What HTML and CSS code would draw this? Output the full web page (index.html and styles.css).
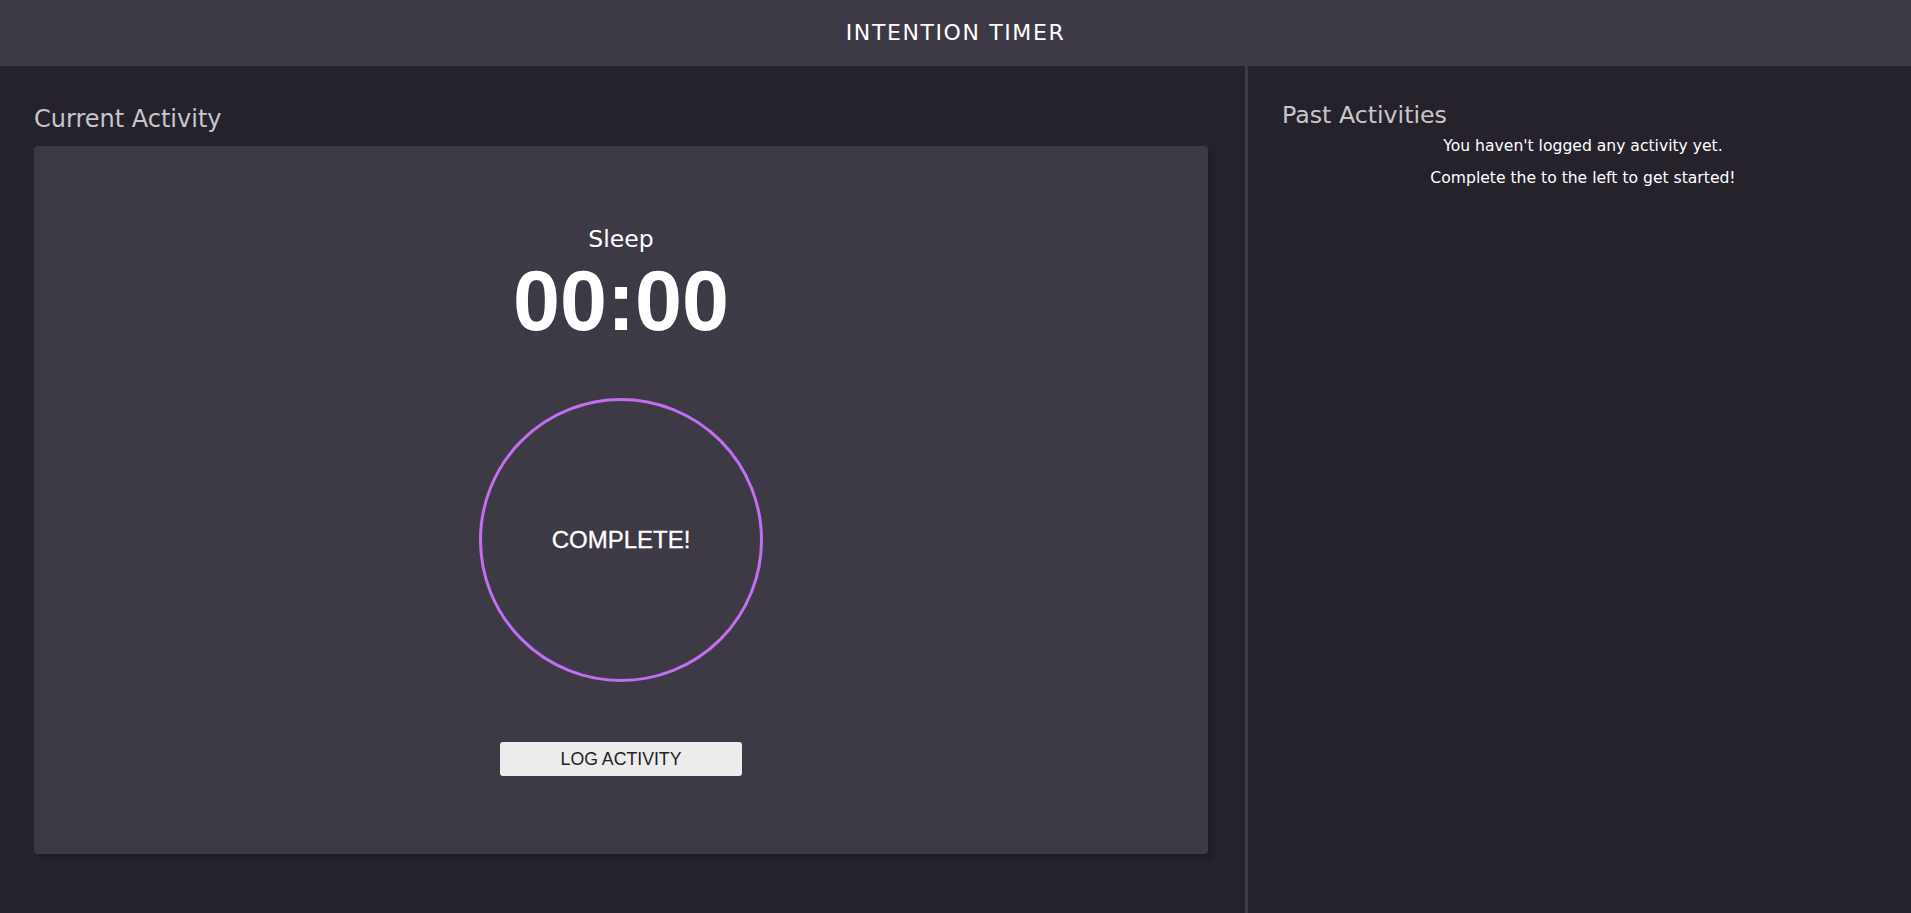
FILE: index.html
```html
<!DOCTYPE html>
<html lang="en">
<head>
<meta charset="utf-8">
<title>Intention Timer</title>
<link rel="stylesheet" href="styles.css">
</head>
<body>
<header class="topbar">
  <h1 class="app-title">INTENTION TIMER</h1>
</header>
<main class="layout">
  <section class="current">
    <h2 class="section-title">Current Activity</h2>
    <div class="card">
      <p class="activity-name">Sleep</p>
      <p class="clock">00:00</p>
      <button class="ring" type="button">COMPLETE!</button>
      <button class="log-btn" type="button">LOG ACTIVITY</button>
    </div>
  </section>
  <aside class="past">
    <h2 class="past-title">Past Activities</h2>
    <p class="empty-msg">You haven't logged any activity yet.</p>
    <p class="empty-msg second">Complete the to the left to get started!</p>
  </aside>
</main>
</body>
</html>
```

FILE: styles.css
```css
* { box-sizing: border-box; }

html, body {
  margin: 0;
  padding: 0;
  height: 100%;
}

body {
  background: #25222b;
  font-family: "DejaVu Sans", "Liberation Sans", sans-serif;
  color: #ffffff;
  display: flex;
  flex-direction: column;
  overflow: hidden;
}

.topbar {
  height: 66px;
  flex: 0 0 66px;
  background: #3d3a45;
  display: flex;
  align-items: center;
  justify-content: center;
}

.app-title {
  margin: 0;
  font-size: 22px;
  font-weight: normal;
  line-height: 26px;
  color: #ffffff;
  letter-spacing: 1.6px;
}

.layout {
  flex: 1;
  display: grid;
  grid-template-columns: 1245px 1fr;
  min-height: 0;
}

.current {
  padding: 39px 37px 0 34px;
}

.section-title {
  margin: 0 0 13px;
  font-size: 24px;
  line-height: 28px;
  font-weight: normal;
  color: #c8c6cc;
}

.card {
  height: 708px;
  background: #3d3a45;
  border-radius: 4px;
  box-shadow: 5px 5px 3px rgba(0, 0, 0, 0.16);
  display: flex;
  flex-direction: column;
  align-items: center;
  padding-top: 79px;
}

.activity-name {
  margin: 0;
  font-size: 23.5px;
  line-height: 28px;
  color: #ffffff;
}

.clock {
  margin: 6px 0 0;
  font-family: "Liberation Sans", Arial, sans-serif;
  font-weight: bold;
  font-size: 84.5px;
  line-height: 84px;
  color: #ffffff;
}

.ring {
  margin-top: 55px;
  width: 284px;
  height: 284px;
  border-radius: 50%;
  border: 3px solid #c16ff0;
  background: transparent;
  color: #ffffff;
  font-family: "Liberation Sans", Arial, sans-serif;
  font-size: 24px;
  -webkit-text-stroke: 0.3px #ffffff;
  padding: 0;
  cursor: pointer;
}

.log-btn {
  margin-top: 60px;
  width: 242px;
  height: 34px;
  border: none;
  border-radius: 3px;
  background: #ececec;
  color: #222222;
  font-family: "Liberation Sans", Arial, sans-serif;
  font-size: 17.7px;
  padding: 0;
  cursor: pointer;
}

.past {
  border-left: 3px solid #3d3a45;
  padding: 36px 27px 0 34px;
}

.past-title {
  margin: 0 0 8px;
  font-size: 23.7px;
  line-height: 26px;
  font-weight: normal;
  color: #c8c6cc;
}

.empty-msg {
  margin: 0;
  text-align: center;
  font-size: 15.6px;
  line-height: 20px;
  color: #ffffff;
}

.empty-msg.second {
  margin-top: 12px;
}
```
